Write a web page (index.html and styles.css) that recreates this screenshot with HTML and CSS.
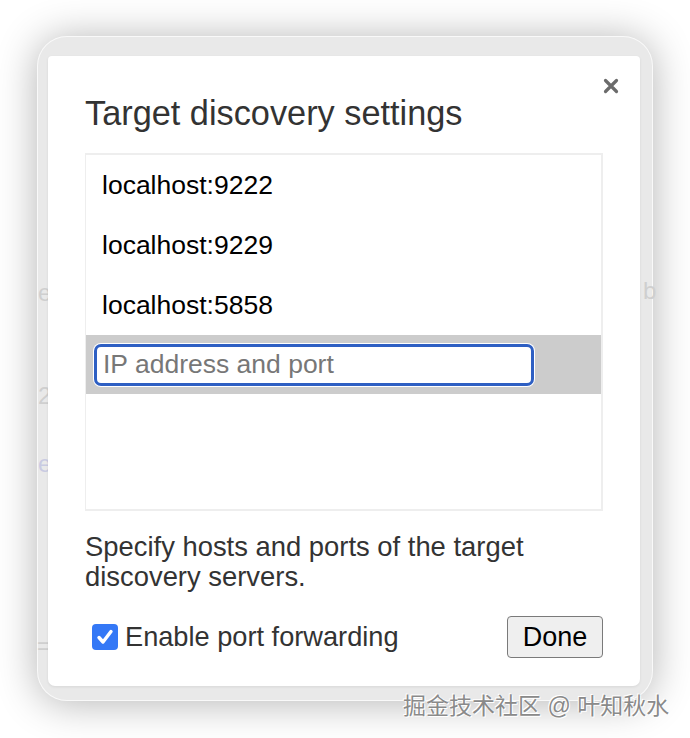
FILE: index.html
```html
<!DOCTYPE html>
<html>
<head>
<meta charset="utf-8">
<link rel="stylesheet" href="styles.css">
</head>
<body>
<div class="stage">
  <div class="frame">
    <span class="ghost g-e1">e</span>
    <span class="ghost g-b">b</span>
    <span class="ghost g-2">2</span>
    <span class="ghost g-e2">e</span>
    <span class="ghost g-eq">=</span>
    <div class="dialog">
      <button class="close" aria-label="Close">
        <svg width="16" height="16" viewBox="0 0 16 16"><path d="M2.5 2.5 L13.5 13.5 M13.5 2.5 L2.5 13.5" stroke="#6b6b6b" stroke-width="3.2" stroke-linecap="round"/></svg>
      </button>
      <h1 class="title">Target discovery settings</h1>
      <div class="list">
        <div class="row">localhost:9222</div>
        <div class="row">localhost:9229</div>
        <div class="row">localhost:5858</div>
        <div class="row row-edit">
          <div class="input"><span class="placeholder">IP address and port</span></div>
        </div>
      </div>
      <p class="desc">Specify hosts and ports of the target discovery servers.</p>
      <div class="footer">
        <label class="check">
          <span class="box">
            <svg width="26" height="26" viewBox="0 0 26 26"><path d="M7 13.5 L11 18 L19 7.5" fill="none" stroke="#fff" stroke-width="3.4" stroke-linecap="round" stroke-linejoin="round"/></svg>
          </span>
          <span class="check-label">Enable port forwarding</span>
        </label>
        <button class="done">Done</button>
      </div>
    </div>
  </div>
  <div class="watermark">掘金技术社区 @ 叶知秋水</div>
</div>
</body>
</html>
```
FILE: styles.css
```css
html, body {
  margin: 0;
  padding: 0;
  background: #ffffff;
}
body {
  width: 690px;
  height: 738px;
  overflow: hidden;
  font-family: "Liberation Sans", Arial, sans-serif;
}
.stage {
  position: relative;
  width: 690px;
  height: 738px;
  padding-top: 36px;
  box-sizing: border-box;
}
.frame {
  position: relative;
  margin-left: 37px;
  width: 616px;
  height: 665px;
  box-sizing: border-box;
  padding: 20px 13px 0 11px;
  border-radius: 30px;
  background: #e9e9e9;
  box-shadow: 0 0 0 1px rgba(255,255,255,0.7) inset, 0 2px 40px rgba(0,0,0,0.3);
}
.ghost {
  position: absolute;
  font-size: 24px;
  color: #cfcfcf;
  z-index: 0;
}
.g-e1 { left: 1px; top: 243px; }
.g-b { left: 606px; top: 241px; }
.g-2 { left: 1px; top: 346px; }
.g-e2 { left: 1px; top: 414px; color: #c9cbe2; }
.g-eq { left: 0px; top: 596px; }
.dialog {
  position: relative;
  z-index: 1;
  width: 592px;
  height: 630px;
  box-sizing: border-box;
  background: #ffffff;
  border-radius: 4px 4px 7px 7px;
  padding: 37px 37px 0 37px;
  box-shadow: 0 1px 3px rgba(0,0,0,0.08);
}
.close {
  position: absolute;
  top: 22px;
  right: 21px;
  width: 16px;
  height: 16px;
  padding: 0;
  border: 0;
  background: transparent;
  display: flex;
}
.title {
  margin: 0;
  font-weight: normal;
  font-size: 34.3px;
  line-height: 40px;
  color: #333333;
  height: 40px;
}
.list {
  margin-top: 20px;
  height: 358px;
  box-sizing: border-box;
  border: 2px solid #eeeeee;
  border-left-width: 1px;
  padding-top: 0;
}
.row {
  height: 60px;
  box-sizing: border-box;
  padding-left: 16px;
  display: flex;
  align-items: center;
  font-size: 26.5px;
  color: #000;
}
.row-edit {
  background: #cccccc;
  padding-left: 8px;
  height: 59px;
}
.input {
  width: 440px;
  height: 42px;
  box-sizing: border-box;
  border: 3px solid #2e5fc3;
  border-radius: 7px;
  background: #fff;
  box-shadow: 0 0 0 1px #ffffff;
  display: flex;
  align-items: center;
  padding-left: 6px;
}
.placeholder {
  font-size: 26.5px;
  color: #777777;
}
.desc {
  margin: 21px 0 0 0;
  font-size: 27.4px;
  line-height: 30px;
  color: #333333;
}
.footer {
  margin-top: 24px;
  height: 42px;
  display: flex;
  align-items: center;
  justify-content: space-between;
}
.check {
  display: flex;
  align-items: center;
  padding-left: 7px;
}
.box {
  width: 26px;
  height: 26px;
  border-radius: 4px;
  background: #3478f6;
  display: flex;
  margin-right: 7px;
}
.check-label {
  font-size: 27.2px;
  color: #333333;
}
.done {
  width: 96px;
  height: 42px;
  box-sizing: border-box;
  border: 1px solid #7a7a7a;
  border-radius: 4px;
  background: #efefef;
  font-family: "Liberation Sans", Arial, sans-serif;
  font-size: 27px;
  color: #000;
  padding: 0;
}
.watermark {
  position: absolute;
  left: 403px;
  top: 687px;
  font-family: "Liberation Sans", "Noto Sans CJK SC", sans-serif;
  font-size: 23px;
  color: #8a8a8a;
  text-shadow: 0 0 2px #fff, 0 0 1px #fff, 1px 1px 0 #fff, -1px -1px 0 #fff;
  white-space: nowrap;
}
```
